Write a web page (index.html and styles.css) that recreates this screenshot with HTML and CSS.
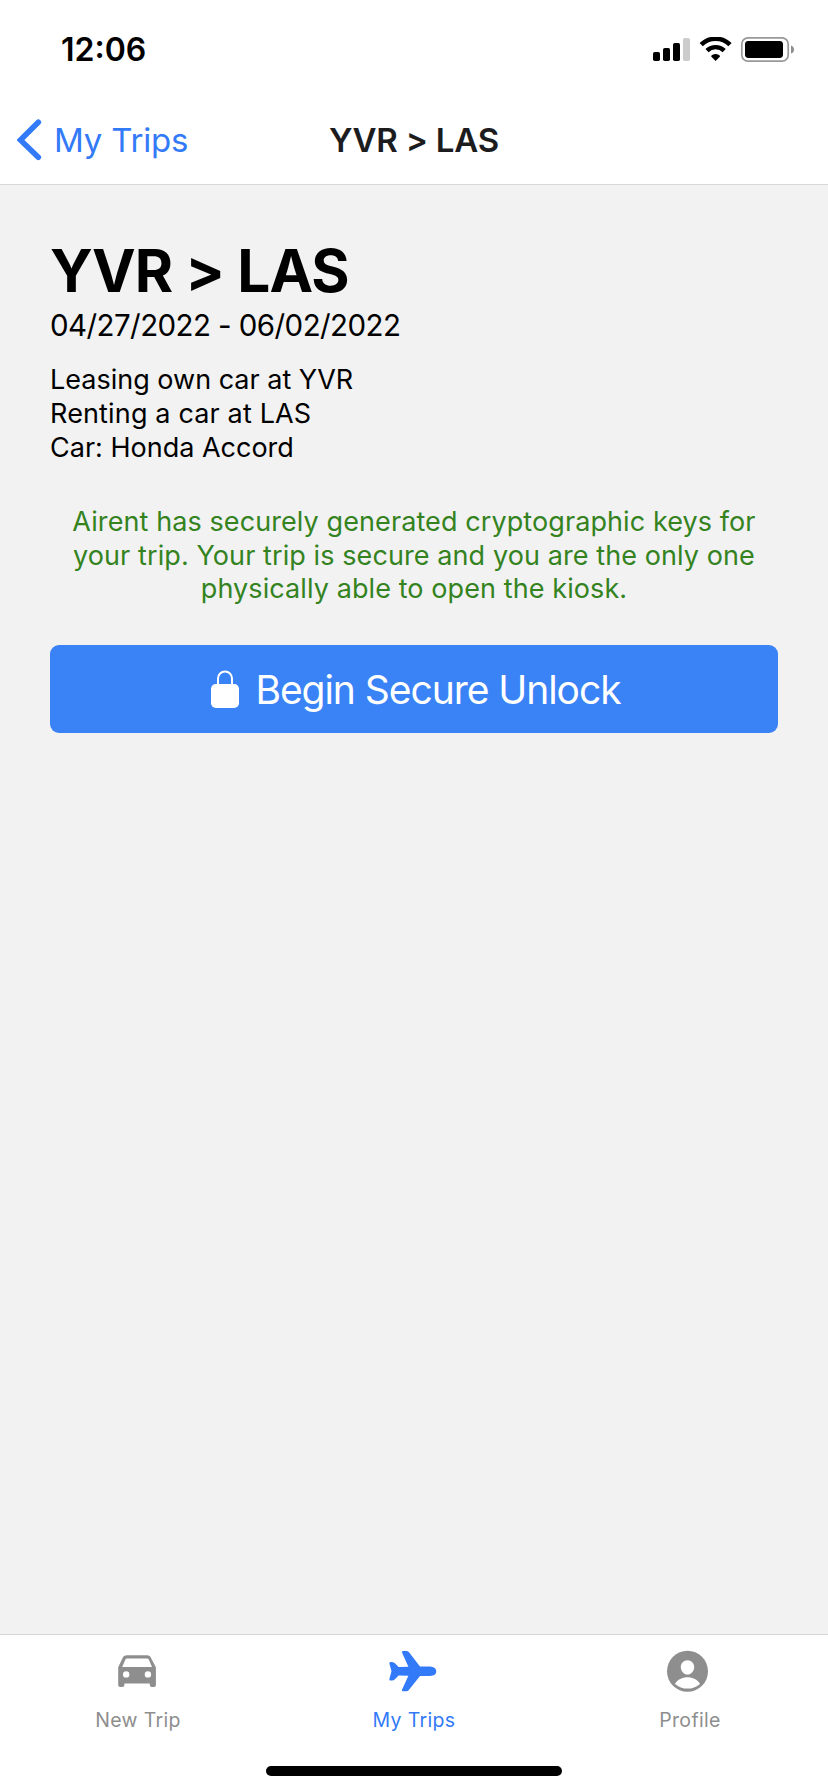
FILE: index.html
```html
<!DOCTYPE html>
<html lang="en">
<head>
<meta charset="utf-8">
<title>YVR &gt; LAS</title>
<link rel="stylesheet" href="styles.css">
</head>
<body>
<div class="screen">
  <div class="status-bar">
    <span class="clock">12:06</span>
    <svg class="status-icons" width="142" height="26" viewBox="0 0 142 26">
      <rect x="0" y="15" width="7" height="9" rx="1.7"/>
      <rect x="10" y="11" width="7" height="13" rx="1.7"/>
      <rect x="20" y="6" width="7" height="18" rx="1.7"/>
      <rect x="30" y="1" width="7" height="23" rx="1.7" fill="#ccc"/>
      <g fill="none" stroke="#000">
        <path d="M48.2 7.7A20.5 20.5 0 0 1 77 7.7" stroke-width="4.6"/>
        <path d="M54 13.6A12.3 12.3 0 0 1 71.2 13.6" stroke-width="4.4"/>
      </g>
      <path d="M62.6 24L58.2 19.6Q57.9 18.7 59.2 18A7 7 0 0 1 66 18Q67.3 18.7 67 19.6Z"/>
      <rect x="88.8" y="0.8" width="46.4" height="23.4" rx="6.2" fill="none" stroke="#999" stroke-width="1.7"/>
      <rect x="92" y="4" width="38" height="17" rx="3.4"/>
      <path d="M138 8.5Q141 9.5 141 12.5Q141 15.5 138 16.5Z" fill="#8e8e8e"/>
    </svg>
  </div>
  <header class="nav-bar">
    <a class="back">
      <svg width="25" height="42" viewBox="0 0 25 42"><path d="M21.3 3.2L3.4 21L21.3 38.3" fill="none" stroke="currentColor" stroke-width="5.6" stroke-linecap="round" stroke-linejoin="miter"/></svg>
      <span class="back-label">My Trips</span>
    </a>
    <div class="nav-title">YVR &gt; LAS</div>
  </header>
  <main class="content">
    <h1 class="route">YVR &gt; LAS</h1>
    <p class="dates">04/27/2022 - 06/02/2022</p>
    <div class="details">
      <p class="leasing">Leasing own car at YVR</p>
      <p class="renting">Renting a car at LAS</p>
      <p class="car">Car: Honda Accord</p>
    </div>
    <p class="notice">Airent has securely generated cryptographic keys for<br>your trip. Your trip is secure and you are the only one<br>physically able to open the kiosk.</p>
    <button class="unlock">
      <svg class="lock" width="28" height="38" viewBox="0 0 28 38"><path d="M7 15V8.5A7 7 0 0 1 21 8.5V15" fill="none" stroke="#fff" stroke-width="2"/><rect x="0" y="14" width="28" height="24" rx="4.8" fill="#fff"/></svg>
      <span>Begin Secure Unlock</span>
    </button>
  </main>
  <nav class="tab-bar">
    <a class="tab">
      <svg class="tab-icon" width="48" height="42" viewBox="0 0 48 42"><path fill="currentColor" fill-rule="evenodd" d="M12 5.2H34Q37 5.2 38 8L42.9 17.3V35Q42.9 37 40.9 37H38.8Q36.8 37 36.8 35V33.6H11.4V35Q11.4 37 9.4 37H7.2Q5.2 37 5.2 35V17.3L9.6 8Q10.6 5.2 14 5.2ZM14 8.6Q12.8 8.6 12.2 9.9L9.2 17H39L36 9.9Q35.3 8.6 34 8.6ZM13.2 21.2A3.2 3.2 0 1 0 13.2 27.6A3.2 3.2 0 1 0 13.2 21.2ZM34.9 21.2A3.2 3.2 0 1 0 34.9 27.6A3.2 3.2 0 1 0 34.9 21.2Z"/></svg>
      <span class="tab-label">New Trip</span>
    </a>
    <a class="tab tab-active">
      <svg class="tab-icon" width="48" height="42" viewBox="0 0 48 42"><path fill="currentColor" d="M13 2.5Q12.5 1 14 1H17Q19 1 20 2.3L31 16.4H41Q47.3 17 47.3 21.2Q47.3 25.6 41 26H31L20 39.7Q19 41.3 17 41.3H14Q12.5 41.3 13 39.8L19.4 25.7L9.6 25.4L6.2 29Q4.8 30.5 2.8 30.5H1.5Q0 30.5 .4 29L2.5 21.2L.4 13.5Q0 12 1.5 12H2.8Q5 12 6.2 13.5L9.6 17L19.4 16.7Z"/></svg>
      <span class="tab-label">My Trips</span>
    </a>
    <a class="tab">
      <svg class="tab-icon" width="48" height="42" viewBox="0 0 48 42"><circle cx="22.5" cy="21.3" r="20.5" fill="currentColor"/><path fill="#fff" transform="translate(-1)" d="M23.5 10.2C27.3 10.2 30.3 13.2 30.2 17.3C30.1 21.2 27.2 24.6 23.5 24.6C19.8 24.6 16.9 21.2 16.8 17.3C16.7 13.2 19.7 10.2 23.5 10.2ZM11 33.9C13.5 29.5 18.5 27.3 23.5 27.3C28.5 27.3 33.5 29.5 36 33.9C32.5 37 28 38.6 23.5 38.6C19 38.6 14.5 37 11 33.9Z"/></svg>
      <span class="tab-label">Profile</span>
    </a>
  </nav>
  <div class="home-area"><div class="home-indicator"></div></div>
</div>
</body>
</html>
```
FILE: styles.css
```css
* { box-sizing: border-box; }
body { margin: 0; font-family: Inter, "Liberation Sans", sans-serif; color: #000; background: #fff; }
h1, p { margin: 0; white-space: nowrap; }
svg { display: block; flex: none; }
span { white-space: nowrap; }

.screen { width: 828px; height: 1792px; display: flex; flex-direction: column; }

.status-bar { height: 96px; display: flex; justify-content: space-between; padding: 30px 33px 0 61px; }
.clock { font-size: 32px; line-height: 40px; font-weight: 600; }
.status-icons { margin-top: 7px; }

.nav-bar { height: 89px; display: grid; grid-template-columns: 1fr auto 1fr; align-items: start; border-bottom: 1px solid #d8d8d8; font-feature-settings: "calt" 0; }
.back { display: flex; gap: 12px; padding: 23px 0 0 17px; color: #327af7; }
.back-label { font-size: 33px; line-height: 44px; letter-spacing: -.2px; margin-top: -1px; }
.nav-title { font-size: 33px; line-height: 44px; font-weight: 600; letter-spacing: -.2px; color: #1c1c1e; padding-top: 22px; }

.content { flex: 1; background: #f2f2f2; padding: 50px 50px 0; font-feature-settings: "calt" 0; }
.route { font-size: 58.5px; line-height: 72px; font-weight: 700; letter-spacing: -.85px; }
.dates { font-size: 29.5px; line-height: 36px; letter-spacing: -.58px; }
.details { padding-top: 20px; font-size: 27px; line-height: 34px; }
.renting { letter-spacing: .15px; }
.notice { padding-top: 40px; font-size: 27px; line-height: 33.7px; letter-spacing: .09px; text-align: center; color: #34831f; }
.unlock { width: 728px; height: 88px; margin-top: 39px; padding: 2px 0 0 4px; border: 0; border-radius: 9px; background: #3a83f7; color: #fff; font: 400 39px/48px Inter, "Liberation Sans", sans-serif; letter-spacing: -1.05px; display: flex; align-items: center; justify-content: center; gap: 16px; }
.lock { margin-bottom: 2px; }

.tab-bar { height: 106px; flex: none; display: grid; grid-template-columns: repeat(3, 1fr); border-top: 1px solid #d5d5d5; }
.tab { display: flex; flex-direction: column; align-items: center; padding-top: 15px; color: #8e8e8e; }
.tab-active { color: #327af7; }
.tab-icon { margin-right: 2px; }
.tab-label { font-size: 19.5px; line-height: 24px; margin-top: 16px; letter-spacing: .35px; }

.home-area { height: 52px; flex: none; display: flex; justify-content: center; padding-top: 26px; }
.home-indicator { width: 296px; height: 10px; border-radius: 5px; background: #000; }
```
